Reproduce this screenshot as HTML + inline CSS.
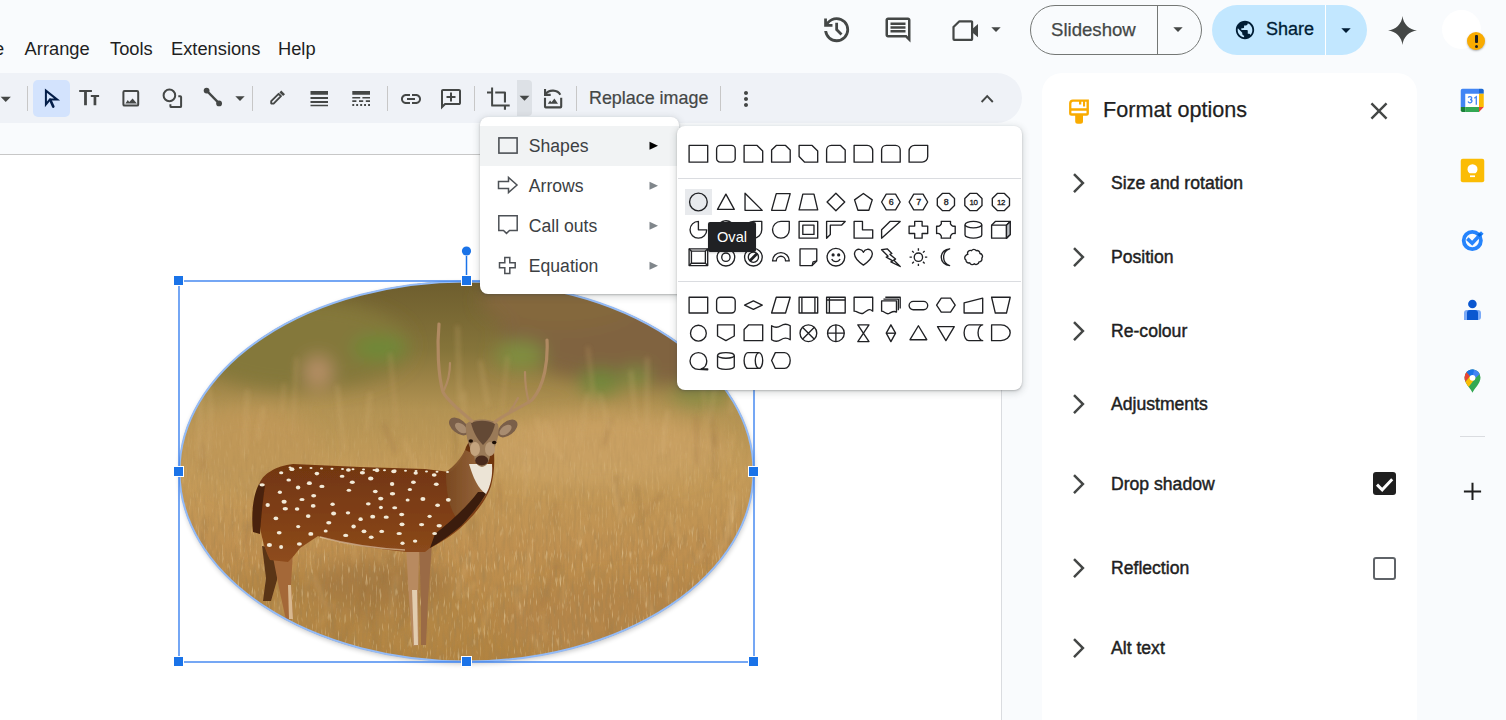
<!DOCTYPE html>
<html><head><meta charset="utf-8">
<style>
*{margin:0;padding:0;box-sizing:border-box}
html,body{width:1506px;height:720px;overflow:hidden;background:#f9fbfd;font-family:"Liberation Sans",sans-serif;color:#1f1f1f}
.a{position:absolute}
svg{display:block;position:absolute;overflow:visible}
.menu{top:39px;font-size:18.3px;line-height:20px;color:#1f1f1f;white-space:nowrap}
#toolbar{left:-30px;top:73px;width:1052px;height:50px;background:#eff2f7;border-radius:25px}
.sep{position:absolute;width:1px;height:25px;top:86px;background:#c7c7c7}
#canvas{left:0;top:155px;width:1001px;height:565px;background:#fff}
#hline{left:0;top:154px;width:1001px;height:1px;background:#c7c7c7}
#vline{left:1001px;top:155px;width:1px;height:565px;background:#dadce0}
#panel{left:1042px;top:73px;width:375px;height:700px;background:#fff;border-radius:20px 20px 0 0}
.prow{position:absolute;left:1111px;font-size:17.6px;line-height:20px;font-weight:normal;-webkit-text-stroke:0.45px #1f1f1f;color:#1f1f1f;white-space:nowrap}
.ic{fill:#444746}
</style></head><body>
<!-- menu -->
<div class="a menu" style="left:-6px">e</div>
<div class="a menu" style="left:24.6px">Arrange</div>
<div class="a menu" style="left:110px">Tools</div>
<div class="a menu" style="left:171px">Extensions</div>
<div class="a menu" style="left:278px">Help</div>

<!-- top right icons -->
<svg style="left:819.8px;top:13px" width="33.3" height="33.3" viewBox="0 -960 960 960"><path class="ic" d="M480-120q-138 0-240.5-91.5T122-440h82q14 104 92.5 172T480-200q117 0 198.5-81.5T760-480q0-117-81.5-198.5T480-760q-69 0-129 32t-101 88h110v80H120v-240h80v94q51-64 124.5-99T480-840q75 0 140.5 28.5t114 77q48.5 48.5 77 114T840-480q0 75-28.5 140.5t-77 114q-48.5 48.5-114 77T480-120Zm112-192L440-464v-216h80v184l128 128-56 56Z"/></svg>
<svg style="left:883px;top:15px" width="30" height="30" viewBox="0 0 24 24"><path class="ic" d="M21.99 4c0-1.1-.89-2-1.99-2H4c-1.1 0-2 .9-2 2v12c0 1.1.9 2 2 2h14l4 4-.01-18zM20 4v13.17L18.83 16H4V4h16zM6 12h12v2H6zm0-3h12v2H6zm0-3h12v2H6z"/></svg>
<svg style="left:948px;top:14px" width="36" height="32" viewBox="0 0 36 32"><path fill="none" stroke="#444746" stroke-width="2.2" stroke-linejoin="round" d="M11.4 7.3H23.3a.8.8 0 0 1 .8.8V25.1a.8.8 0 0 1-.8.8H6.3a.8.8 0 0 1-.8-.8V13z"/><path class="ic" d="M24 15.2L30 10v13.2L24 18.2z"/></svg>
<svg style="left:988px;top:22px" width="16" height="16" viewBox="0 0 24 24"><path class="ic" d="M5 8l7 7 7-7z"/></svg>

<!-- Slideshow button -->
<div class="a" style="left:1030px;top:5px;width:172px;height:50px;border:1.3px solid #747775;border-radius:25px"></div>
<div class="a" style="left:1157px;top:5px;width:1.3px;height:50px;background:#747775"></div>
<div class="a" style="left:1051px;top:19px;font-size:18.6px;line-height:22px;color:#444746;-webkit-text-stroke:0.25px #444746">Slideshow</div>
<svg style="left:1170px;top:22px" width="16" height="16" viewBox="0 0 24 24"><path class="ic" d="M5 8l7 7 7-7z"/></svg>

<!-- Share button -->
<div class="a" style="left:1212px;top:5px;width:155px;height:50px;background:#c2e7ff;border-radius:25px"></div>
<div class="a" style="left:1325px;top:5px;width:1px;height:50px;background:#ffffff"></div>
<svg style="left:1233.9px;top:18.8px" width="22" height="22" viewBox="0 0 24 24"><path fill="#001d35" d="M12 2C6.48 2 2 6.48 2 12s4.48 10 10 10 10-4.48 10-10S17.52 2 12 2zm-1 17.93c-3.95-.49-7-3.85-7-7.93 0-.62.08-1.21.21-1.79L9 15v1c0 1.1.9 2 2 2v1.93zm6.9-2.54c-.26-.81-1-1.39-1.9-1.39h-1v-3c0-.55-.45-1-1-1H8v-2h2c.55 0 1-.45 1-1V7h2c1.1 0 2-.9 2-2v-.41c2.93 1.19 5 4.06 5 7.41 0 2.080-.8 3.97-2.1 5.39z"/></svg>
<div class="a" style="left:1266px;top:18px;font-size:18px;line-height:22px;-webkit-text-stroke:0.3px #001d35;color:#001d35">Share</div>
<svg style="left:1338px;top:23px" width="16" height="16" viewBox="0 0 24 24"><path fill="#001d35" d="M5 8l7 7 7-7z"/></svg>

<!-- Gemini sparkle -->
<svg style="left:1388px;top:16px" width="29" height="29" viewBox="0 0 28 28"><path class="ic" d="M14 0C14.6 7.4 20.6 13.4 28 14 20.6 14.6 14.6 20.6 14 28 13.4 20.6 7.4 14.6 0 14 7.4 13.4 13.4 7.4 14 0z"/></svg>

<!-- avatar -->
<div class="a" style="left:1442px;top:10px;width:39px;height:39px;border-radius:50%;background:#ffffff"></div>
<div class="a" style="left:1467px;top:32px;width:18px;height:18px;border-radius:50%;background:#f9ab00;box-shadow:0 1px 2px rgba(0,0,0,.3)"></div>
<div class="a" style="left:1474.5px;top:35px;width:3px;height:8px;background:#1f1f1f;border-radius:1px"></div>
<div class="a" style="left:1474.5px;top:44.5px;width:3px;height:3px;background:#1f1f1f;border-radius:50%"></div>

<div id="toolbar" class="a"></div>

<!-- toolbar icons -->
<svg style="left:-3.2px;top:90.5px" width="17.5" height="17.5" viewBox="0 0 24 24"><path class="ic" d="M5 8l7 7 7-7z"/></svg>
<div class="sep" style="left:27px"></div>
<div class="a" style="left:33px;top:80px;width:37px;height:37px;background:#d3e3fd;border-radius:5px"></div>
<svg style="left:0;top:0" width="110" height="120" viewBox="0 0 110 120"><path fill="none" stroke="#041e49" stroke-width="2" stroke-linejoin="miter" d="M45.9 90.6V104.4L49.9 99.6H57.2z"/><path stroke="#041e49" stroke-width="2.6" stroke-linecap="round" d="M50.2 99.8L53.3 106.6"/></svg>
<svg style="left:0;top:0" width="110" height="120" viewBox="0 0 110 120"><path class="ic" d="M79.2 89.9H91.9V92H86.9V105.2H84.1V92H79.2zM90.8 95H99.1V97H96.3V105.2H93.6V97H90.8z"/></svg>
<svg style="left:0;top:0" width="200" height="120" viewBox="0 0 200 120"><rect x="123.4" y="91.1" width="14.8" height="14.5" rx="1.2" fill="none" stroke="#444746" stroke-width="2"/><path class="ic" d="M125.4 103.6L127.8 100.1 129.2 101.9 132.6 98.4 136.9 103.6z"/></svg>
<svg style="left:0;top:0" width="200" height="120" viewBox="0 0 200 120"><circle cx="169.4" cy="95.4" r="5.8" fill="none" stroke="#444746" stroke-width="2"/><path fill="none" stroke="#444746" stroke-width="2" d="M178.3 96.2H180.2a.9.9 0 0 1 .9.9V106.2a.9.9 0 0 1-.9.9H171.3a.9.9 0 0 1-.9-.9V104.3"/></svg>
<svg style="left:0;top:0" width="300" height="120" viewBox="0 0 300 120"><path stroke="#444746" stroke-width="2.3" d="M206.6 90.6L219.1 103.4"/><circle cx="206.6" cy="90.6" r="2.9" fill="#444746"/><circle cx="219.1" cy="103.4" r="2.9" fill="#444746"/></svg>
<svg style="left:232px;top:90.5px" width="16" height="16" viewBox="0 0 24 24"><path class="ic" d="M5 8l7 7 7-7z"/></svg>
<div class="sep" style="left:252px"></div>
<svg style="left:0;top:0" width="300" height="120" viewBox="0 0 300 120"><path fill="none" stroke="#444746" stroke-width="1.9" stroke-linejoin="round" d="M271.2 103.3V101.2L278.6 93.8 281 96.2 273.6 103.6H271.5z"/><path class="ic" d="M279.4 92.4L281.3 90.5 285 94.2 283.1 96.1z"/></svg>
<svg style="left:0;top:0" width="400" height="120" viewBox="0 0 400 120"><path class="ic" d="M310.5 91h17.5v3.7h-17.5zM310.5 96.9h17.5V99h-17.5zM310.5 101.1h17.5v1.8h-17.5zM310.5 104.8h17.5v1.4h-17.5z"/></svg>
<svg style="left:0;top:0" width="400" height="120" viewBox="0 0 400 120"><path class="ic" d="M352.3 91H370v3.7H352.3zM352.3 96.9h7.9v1.7h-7.9zM362.4 96.9H370v1.7h-7.6zM352.3 100.3h4.1v1.7h-4.1zM359 100.3h4.2v1.7H359zM365.8 100.3H370v1.7h-4.2zM352.3 104h1.9v2h-1.9zM356.2 104h1.9v2h-1.9zM360.2 104h1.9v2h-1.9zM364.1 104H366v2h-1.9zM368.1 104H370v2h-1.9z"/></svg>
<div class="sep" style="left:387px"></div>
<svg style="left:399px;top:87px" width="24" height="24" viewBox="0 0 24 24"><path class="ic" d="M3.9 12c0-1.71 1.39-3.1 3.1-3.1h4V7H7c-2.76 0-5 2.24-5 5s2.24 5 5 5h4v-1.9H7c-1.71 0-3.1-1.39-3.1-3.1zM8 13h8v-2H8v2zm9-6h-4v1.9h4c1.710 0 3.1 1.39 3.1 3.1s-1.39 3.1-3.1 3.1h-4V17h4c2.76 0 5-2.24 5-5s-2.24-5-5-5z"/></svg>
<svg style="left:438.5px;top:86.5px" width="24" height="24" viewBox="0 0 24 24"><path class="ic" d="M11 14.5h2v-3.5h3.5V9H13V5.5h-2V9H7.5v2H11zM2 22.5V4q0-.825.588-1.413Q3.175 2 4 2h16q.825 0 1.413.587Q22 3.175 22 4v12q0 .825-.587 1.413Q20.825 18 20 18H6.5zM4 17.6L5.7 16H20V4H4z"/></svg>
<div class="sep" style="left:474px"></div>
<svg style="left:0;top:0" width="600" height="120" viewBox="0 0 600 120"><path class="ic" d="M487 91.4H491.1V87.6H493.1V104.5H509.7V106.6H506V109.8H503.9V106.6H492.3a1.2 1.2 0 0 1-1.2-1.2V93.5H487zM495.2 91.4H504.8a1.2 1.2 0 0 1 1.2 1.2V102.5H503.9V93.5H495.2z"/></svg>
<div class="a" style="left:517px;top:80px;width:15px;height:36px;background:#dde1e6;border-radius:0 4px 4px 0"></div>
<svg style="left:516px;top:90px" width="17" height="17" viewBox="0 0 24 24"><path class="ic" d="M5 8l7 7 7-7z"/></svg>
<svg style="left:536px;top:82px" width="34" height="32" viewBox="0 0 34 32"><path fill="none" stroke="#444746" stroke-width="2.1" d="M9 15.8V24.6a.8.8 0 0 0 .8.8h14.6a.8.8 0 0 0 .8-.8V15.8"/><path fill="none" stroke="#444746" stroke-width="2.1" d="M9.6 12A8.2 6.6 0 0 1 24.3 12.7"/><path fill="#444746" d="M8 7.1h2.1v4.7h4.6v2.1H8z"/><path fill="#444746" d="M11.8 21.8l2.3-3.2 1.4 1.7 2.9-3.8 3.6 5.3z"/></svg>
<div class="sep" style="left:576px"></div>
<div class="a" style="left:589px;top:87px;font-size:17.9px;line-height:22px;color:#444746;-webkit-text-stroke:0.2px #444746;white-space:nowrap">Replace image</div>
<div class="sep" style="left:720px"></div>
<svg style="left:734px;top:86.5px" width="24" height="24" viewBox="0 0 24 24"><path class="ic" d="M12 8c1.1 0 2-.9 2-2s-.9-2-2-2-2 .9-2 2 .9 2 2 2zm0 2c-1.1 0-2 .9-2 2s.9 2 2 2 2-.9 2-2-.9-2-2-2zm0 6c-1.1 0-2 .9-2 2s.9 2 2 2 2-.9 2-2-.9-2-2-2z"/></svg>
<svg style="left:0;top:0" width="1010" height="120" viewBox="0 0 1010 120"><path fill="none" stroke="#444746" stroke-width="1.9" d="M981.6 102L987.2 96.1 992.8 102"/></svg>
<div id="hline" class="a"></div>
<div id="canvas" class="a"></div>
<div id="vline" class="a"></div>
<!-- photo -->
<svg style="left:0;top:0" width="1002" height="720" viewBox="0 0 1002 720">
<defs>
<clipPath id="ov"><ellipse cx="466.5" cy="471.5" rx="287.5" ry="190.5"/></clipPath>
<linearGradient id="bg" x1="0" y1="0" x2="0" y2="1">
<stop offset="0" stop-color="#6a5a2c"/>
<stop offset="0.2" stop-color="#85743a"/>
<stop offset="0.35" stop-color="#b39353"/>
<stop offset="0.5" stop-color="#c59c5a"/>
<stop offset="0.7" stop-color="#bf9050"/>
<stop offset="1" stop-color="#b0823f"/>
</linearGradient>
<filter id="b8" x="-50%" y="-50%" width="200%" height="200%"><feGaussianBlur stdDeviation="9"/></filter>
<filter id="b4" x="-50%" y="-50%" width="200%" height="200%"><feGaussianBlur stdDeviation="2.5"/></filter>
<filter id="b1"><feGaussianBlur stdDeviation="0.5"/></filter>
<filter id="grain" x="0" y="0" width="100%" height="100%"><feTurbulence type="fractalNoise" baseFrequency="0.35 0.06" numOctaves="2" seed="4"/><feColorMatrix type="matrix" values="0 0 0 0 0.35  0 0 0 0 0.22  0 0 0 0 0.08  0 0 0 -2.2 1.25"/></filter>
<filter id="grain2" x="0" y="0" width="100%" height="100%"><feTurbulence type="fractalNoise" baseFrequency="0.5 0.08" numOctaves="2" seed="9"/><feColorMatrix type="matrix" values="0 0 0 0 0.92  0 0 0 0 0.78  0 0 0 0 0.5  0 0 0 2.6 -1.55"/></filter>
<linearGradient id="gmask" x1="0" y1="0" x2="0" y2="1"><stop offset="0" stop-color="#fff" stop-opacity="0"/><stop offset="0.32" stop-color="#fff" stop-opacity="0"/><stop offset="0.5" stop-color="#fff" stop-opacity="0.35"/><stop offset="0.75" stop-color="#fff" stop-opacity="1"/><stop offset="1" stop-color="#fff" stop-opacity="1"/></linearGradient>
<mask id="lowmask"><rect x="170" y="270" width="600" height="400" fill="url(#gmask)"/></mask>

</defs>
<ellipse cx="467" cy="473.5" rx="287.5" ry="190.5" fill="#000" opacity=".22" filter="url(#b4)"/>
<g clip-path="url(#ov)">
<rect x="170" y="270" width="600" height="400" fill="url(#bg)"/>
<g filter="url(#b8)">
<ellipse cx="650" cy="330" rx="150" ry="55" fill="#806440"/>
<ellipse cx="560" cy="300" rx="80" ry="30" fill="#84683e"/>
<ellipse cx="300" cy="345" rx="110" ry="45" fill="#84783a"/>
<ellipse cx="380" cy="348" rx="28" ry="12" fill="#6d8a38"/>
<ellipse cx="520" cy="355" rx="25" ry="14" fill="#7f8f40"/>
<ellipse cx="600" cy="382" rx="20" ry="13" fill="#70893a"/>
<ellipse cx="636" cy="376" rx="14" ry="9" fill="#7a9040"/>
<ellipse cx="700" cy="395" rx="30" ry="12" fill="#8a8c45"/>
<ellipse cx="318" cy="372" rx="14" ry="16" fill="#b89068"/>
<ellipse cx="600" cy="450" rx="130" ry="35" fill="#c9a062"/>
<ellipse cx="250" cy="450" rx="70" ry="40" fill="#c09858"/>
<ellipse cx="330" cy="610" rx="140" ry="40" fill="#b38645"/>
<ellipse cx="640" cy="620" rx="140" ry="40" fill="#b5864a"/>
<ellipse cx="380" cy="585" rx="70" ry="25" fill="#a87c42"/>
</g>
<g filter="url(#b4)" stroke-width="1.3" fill="none" opacity=".8">
<path d="M541 607q8.0 -21.4 15.9 -42.8" stroke="#9a7040"/>
<path d="M197 545q2.7 -24.0 5.4 -48.0" stroke="#d6ad6c"/>
<path d="M246 546q0.8 -11.8 1.6 -23.6" stroke="#9a7040"/>
<path d="M325 605q-5.7 -14.6 -11.4 -29.3" stroke="#e2c08a"/>
<path d="M273 619q2.1 -9.9 4.2 -19.9" stroke="#d6ad6c"/>
<path d="M257 659q4.9 -7.6 9.8 -15.2" stroke="#d6ad6c"/>
<path d="M686 505q0.7 -24.3 1.4 -48.7" stroke="#d6ad6c"/>
<path d="M285 658q8.4 -10.9 16.7 -21.9" stroke="#e2c08a"/>
<path d="M353 521q-6.4 -10.4 -12.8 -20.8" stroke="#dcb77c"/>
<path d="M372 624q1.7 -17.8 3.5 -35.5" stroke="#8e6a3a"/>
<path d="M218 520q3.5 -12.9 7.1 -25.7" stroke="#d6ad6c"/>
<path d="M459 599q8.6 -8.5 17.1 -17.0" stroke="#dcb77c"/>
<path d="M731 520q0.9 -14.6 1.8 -29.2" stroke="#e2c08a"/>
<path d="M392 570q-8.2 -7.7 -16.3 -15.3" stroke="#d6ad6c"/>
<path d="M542 655q-4.6 -9.6 -9.1 -19.2" stroke="#e2c08a"/>
<path d="M380 520q5.0 -16.7 9.9 -33.4" stroke="#dcb77c"/>
<path d="M522 616q-3.7 -13.9 -7.3 -27.9" stroke="#e2c08a"/>
<path d="M729 461q2.0 -13.5 4.0 -26.9" stroke="#d6ad6c"/>
<path d="M377 648q-3.4 -17.0 -6.8 -34.1" stroke="#8e6a3a"/>
<path d="M358 620q4.0 -18.5 8.0 -36.9" stroke="#8e6a3a"/>
<path d="M758 476q8.8 -8.3 17.5 -16.7" stroke="#9a7040"/>
<path d="M716 447q-2.8 -20.5 -5.6 -40.9" stroke="#8e6a3a"/>
<path d="M444 535q7.5 -8.5 15.0 -16.9" stroke="#dcb77c"/>
<path d="M645 515q8.7 -11.1 17.3 -22.2" stroke="#9a7040"/>
<path d="M731 582q-7.1 -21.3 -14.2 -42.6" stroke="#e2c08a"/>
<path d="M396 453q-6.5 -14.9 -12.9 -29.7" stroke="#9a7040"/>
<path d="M674 660q-0.2 -15.4 -0.4 -30.9" stroke="#8e6a3a"/>
<path d="M458 505q-6.4 -14.6 -12.7 -29.1" stroke="#e2c08a"/>
<path d="M657 560q7.9 -10.6 15.7 -21.3" stroke="#8e6a3a"/>
<path d="M284 551q0.9 -16.5 1.7 -33.0" stroke="#9a7040"/>
<path d="M390 617q3.5 -21.1 7.0 -42.1" stroke="#dcb77c"/>
<path d="M621 522q-3.9 -19.8 -7.9 -39.7" stroke="#e2c08a"/>
<path d="M334 661q8.2 -20.0 16.4 -40.1" stroke="#8e6a3a"/>
<path d="M557 571q0.8 -7.7 1.7 -15.4" stroke="#8e6a3a"/>
<path d="M369 502q0.0 -12.6 0.0 -25.1" stroke="#8e6a3a"/>
<path d="M382 585q5.9 -20.4 11.8 -40.8" stroke="#8e6a3a"/>
<path d="M715 479q-0.9 -22.7 -1.8 -45.3" stroke="#8e6a3a"/>
<path d="M735 557q-6.0 -16.8 -12.0 -33.5" stroke="#8e6a3a"/>
<path d="M724 547q4.0 -19.6 7.9 -39.2" stroke="#e2c08a"/>
<path d="M280 616q3.0 -17.7 6.0 -35.3" stroke="#e2c08a"/>
<path d="M356 564q-4.1 -22.7 -8.3 -45.3" stroke="#dcb77c"/>
<path d="M293 572q-5.7 -18.4 -11.5 -36.8" stroke="#d6ad6c"/>
<path d="M546 449q-4.9 -15.8 -9.9 -31.5" stroke="#dcb77c"/>
<path d="M697 465q-0.3 -24.4 -0.6 -48.9" stroke="#9a7040"/>
<path d="M201 545q2.0 -14.2 4.0 -28.3" stroke="#9a7040"/>
<path d="M299 602q-2.7 -14.0 -5.4 -28.1" stroke="#8e6a3a"/>
<path d="M676 635q0.9 -19.6 1.7 -39.1" stroke="#dcb77c"/>
<path d="M499 508q0.2 -12.7 0.5 -25.3" stroke="#9a7040"/>
<path d="M350 519q-1.6 -9.8 -3.3 -19.5" stroke="#9a7040"/>
<path d="M553 523q1.7 -10.0 3.5 -20.0" stroke="#9a7040"/>
<path d="M457 485q-7.4 -9.8 -14.7 -19.7" stroke="#dcb77c"/>
<path d="M401 513q0.7 -23.5 1.4 -47.1" stroke="#8e6a3a"/>
<path d="M545 641q-1.2 -14.1 -2.5 -28.2" stroke="#d6ad6c"/>
<path d="M466 548q-2.1 -19.9 -4.2 -39.8" stroke="#d6ad6c"/>
<path d="M526 498q-0.1 -24.7 -0.1 -49.3" stroke="#e2c08a"/>
<path d="M191 653q7.7 -12.9 15.5 -25.8" stroke="#d6ad6c"/>
<path d="M457 467q-1.0 -18.4 -2.0 -36.8" stroke="#8e6a3a"/>
<path d="M203 471q-0.4 -14.4 -0.7 -28.7" stroke="#9a7040"/>
<path d="M339 650q-4.6 -21.2 -9.2 -42.4" stroke="#8e6a3a"/>
<path d="M669 602q-0.1 -12.5 -0.3 -25.0" stroke="#e2c08a"/>
<path d="M481 634q7.1 -22.9 14.2 -45.8" stroke="#dcb77c"/>
<path d="M621 508q-2.9 -16.8 -5.9 -33.7" stroke="#8e6a3a"/>
<path d="M604 446q3.3 -13.6 6.5 -27.2" stroke="#9a7040"/>
<path d="M257 441q3.3 -17.2 6.7 -34.4" stroke="#dcb77c"/>
<path d="M695 563q5.0 -7.8 10.0 -15.5" stroke="#e2c08a"/>
<path d="M525 595q2.7 -24.2 5.4 -48.4" stroke="#e2c08a"/>
<path d="M456 594q7.2 -20.1 14.4 -40.2" stroke="#e2c08a"/>
<path d="M661 455q3.5 -22.1 7.0 -44.3" stroke="#e2c08a"/>
<path d="M518 586q-3.4 -15.8 -6.8 -31.5" stroke="#d6ad6c"/>
<path d="M457 564q-3.0 -16.2 -6.1 -32.4" stroke="#d6ad6c"/>
<path d="M427 562q4.2 -8.3 8.4 -16.7" stroke="#8e6a3a"/>
<path d="M655 618q-8.5 -19.1 -17.1 -38.2" stroke="#e2c08a"/>
<path d="M748 665q-8.1 -19.8 -16.2 -39.5" stroke="#dcb77c"/>
<path d="M307 585q3.8 -24.2 7.6 -48.3" stroke="#d6ad6c"/>
<path d="M757 599q-5.7 -15.2 -11.4 -30.3" stroke="#d6ad6c"/>
<path d="M420 476q-8.2 -18.4 -16.4 -36.8" stroke="#dcb77c"/>
<path d="M563 608q1.3 -12.4 2.6 -24.8" stroke="#dcb77c"/>
<path d="M611 638q-1.2 -9.9 -2.5 -19.7" stroke="#8e6a3a"/>
<path d="M578 550q2.8 -13.7 5.6 -27.4" stroke="#dcb77c"/>
<path d="M260 506q3.2 -17.5 6.4 -34.9" stroke="#8e6a3a"/>
<path d="M708 565q-4.3 -18.4 -8.5 -36.7" stroke="#9a7040"/>
<path d="M317 627q8.6 -12.5 17.1 -24.9" stroke="#d6ad6c"/>
<path d="M681 542q-6.6 -14.3 -13.3 -28.6" stroke="#dcb77c"/>
<path d="M560 459q-7.4 -19.2 -14.7 -38.4" stroke="#dcb77c"/>
<path d="M474 542q-0.7 -14.3 -1.3 -28.6" stroke="#8e6a3a"/>
<path d="M242 559q-2.1 -17.0 -4.2 -34.0" stroke="#d6ad6c"/>
<path d="M728 537q4.5 -21.4 9.0 -42.8" stroke="#dcb77c"/>
<path d="M744 590q-6.5 -21.9 -13.0 -43.7" stroke="#9a7040"/>
<path d="M398 628q7.7 -12.6 15.5 -25.1" stroke="#8e6a3a"/>
<path d="M642 525q-2.6 -20.1 -5.1 -40.3" stroke="#8e6a3a"/>
<path d="M647 430q0.2 -36.3 0.3 -72.6" stroke="#d6b47a"/>
<path d="M609 428q-4.7 -17.4 -9.3 -34.8" stroke="#d6b47a"/>
<path d="M293 434q1.6 -38.4 3.2 -76.9" stroke="#caa56a"/>
<path d="M180 433q1.2 -37.2 2.4 -74.5" stroke="#caa56a"/>
<path d="M367 432q1.5 -19.8 3.1 -39.6" stroke="#d6b47a"/>
<path d="M397 427q-3.5 -37.0 -7.0 -74.0" stroke="#caa56a"/>
<path d="M244 457q1.7 -33.8 3.4 -67.5" stroke="#d6b47a"/>
<path d="M460 402q-1.3 -38.1 -2.6 -76.2" stroke="#d6b47a"/>
<path d="M579 447q4.5 -26.8 8.9 -53.6" stroke="#d6b47a"/>
<path d="M636 423q-2.6 -26.3 -5.2 -52.7" stroke="#d6b47a"/>
<path d="M199 450q1.6 -29.4 3.1 -58.7" stroke="#caa56a"/>
<path d="M709 449q-3.2 -32.0 -6.3 -64.0" stroke="#caa56a"/>
<path d="M344 451q-3.4 -32.9 -6.7 -65.9" stroke="#d6b47a"/>
<path d="M282 415q1.1 -16.1 2.2 -32.2" stroke="#caa56a"/>
<path d="M184 404q-0.9 -34.5 -1.8 -69.0" stroke="#d6b47a"/>
<path d="M199 458q0.7 -35.9 1.3 -71.9" stroke="#d6b47a"/>
<path d="M596 417q-4.1 -35.1 -8.2 -70.2" stroke="#caa56a"/>
<path d="M211 417q-1.0 -16.3 -2.1 -32.5" stroke="#d6b47a"/>
<path d="M208 458q1.4 -26.1 2.8 -52.3" stroke="#d6b47a"/>
<path d="M731 414q1.4 -32.4 2.8 -64.8" stroke="#d6b47a"/>
<path d="M488 406q-3.9 -22.8 -7.8 -45.7" stroke="#d6b47a"/>
<path d="M527 460q-4.8 -20.4 -9.7 -40.7" stroke="#caa56a"/>
<path d="M462 440q1.3 -24.4 2.5 -48.8" stroke="#d6b47a"/>
<path d="M710 422q3.3 -26.2 6.5 -52.5" stroke="#d6b47a"/>
<path d="M502 410q2.8 -27.1 5.6 -54.2" stroke="#caa56a"/>
</g>
<g mask="url(#lowmask)"><rect x="170" y="270" width="600" height="400" filter="url(#grain)" opacity=".55"/><rect x="170" y="270" width="600" height="400" filter="url(#grain2)" opacity=".6"/></g>
<!-- deer -->
<defs>
<linearGradient id="dbody" x1="0" y1="0" x2="0" y2="1">
<stop offset="0" stop-color="#4e2408"/><stop offset="0.12" stop-color="#6e3410"/><stop offset="0.6" stop-color="#7e3e14"/><stop offset="1" stop-color="#8e4c1c"/>
</linearGradient>
<linearGradient id="dneck" x1="0" y1="0" x2="1" y2="0">
<stop offset="0" stop-color="#7a4a22"/><stop offset="1" stop-color="#9a6a40"/>
</linearGradient>
</defs>
<g filter="url(#b1)">
<path fill="#5a3418" d="M262 546L279 549 277 580 271 601 263 601 266 578z"/>
<path fill="#a46838" d="M272 552L293 552 291 585 293 619 286 620 279 588z"/>
<path fill="#d8b890" d="M288 585L291 585 293 619 289 619z"/>
<path fill="#b88a60" d="M406 546L419 546 418 600 419 645 413 646 409 600z"/>
<path fill="#e2cdb0" d="M412 590L417 590 418 645 414 645z"/>
<path fill="#9a6a44" d="M419 546L432 544 428 600 426 645 421 645 421 600z"/>
<path fill="url(#dbody)" d="M259 485C262 474 276 466 293 464L360 467 425 469 450 472C458 466 463 458 466 447L472 436 494 452C495 468 493 478 491 486 486 502 470 520 458 530 448 538 438 544 430 548L425 552 406 552C380 549 345 545 318 536L300 548C295 555 290 560 288 562L270 560C264 548 261 535 259 520z"/>
<path fill="url(#dneck)" d="M446 472C454 466 460 460 465 450L474 454C477 470 481 484 487 493 480 505 470 516 462 525 452 515 446 500 446 472z" opacity=".95"/>
<path fill="#3a1e0c" d="M487 492C480 505 470 516 462 525 452 534 440 542 430 548L435 534C450 522 466 508 478 492z"/>
<path fill="#4a220a" d="M259 484C253 495 251 515 253 532L260 534C261 518 263 498 265 486z"/>
<path fill="#ece4d6" d="M469 464C473 477 478 489 486 494 490 487 493 477 492 464z"/>
<path fill="none" stroke="#e8d4b8" stroke-width="1.4" opacity=".6" d="M320 537C350 545 385 549 405 550"/>
<ellipse cx="459" cy="426.5" rx="11.5" ry="6.8" fill="#7a5e48" transform="rotate(38 459 426.5)"/>
<ellipse cx="461" cy="428" rx="7" ry="4" fill="#a88c70" transform="rotate(38 461 428)"/>
<ellipse cx="507.5" cy="428.5" rx="11.5" ry="6.8" fill="#7a5e48" transform="rotate(-38 507.5 428.5)"/>
<ellipse cx="505.5" cy="430" rx="7" ry="4" fill="#a88c70" transform="rotate(-38 505.5 430)"/>
<path fill="#9a7a58" d="M466 424C472 418 492 418 498 424 500 432 497 446 490 456 489 462 487 466 482 467 477 466 475 462 474 456 468 446 465 432 466 424z"/>
<path fill="#5a4030" opacity=".85" d="M471 423C478 420 488 420 495 424 493 434 488 440 483 445 478 440 474 434 471 423z"/>
<ellipse cx="475" cy="449" rx="5" ry="7" fill="#c4a47e"/>
<ellipse cx="490" cy="449" rx="5" ry="7" fill="#b89a78"/>
<ellipse cx="470.8" cy="441" rx="2.2" ry="1.8" fill="#1a0e06"/><ellipse cx="494.2" cy="442.5" rx="2.2" ry="1.8" fill="#1a0e06"/>
<ellipse cx="481.7" cy="460.5" rx="6.5" ry="5" fill="#4a2c1c"/>
</g>
<g stroke="#b08a62" fill="none" stroke-linecap="round" stroke-linejoin="round">
<path stroke-width="3.2" d="M472 421C462 412 448 402 443 392 438 375 437 345 439 324"/>
<path stroke-width="2.2" d="M444 390C448 382 450 372 450 363"/>
<path stroke-width="3.2" d="M495 422C505 414 520 408 532 400 545 385 548 360 547 340"/>
<path stroke-width="2.2" d="M529 403C526 392 525 382 525 372M510 411C514 406 516 402 518 398"/>
</g>
<g fill="#f2ead8" filter="url(#b1)">
<ellipse cx="348.0" cy="512.8" rx="2.2" ry="1.6"/>
<ellipse cx="437.6" cy="505.3" rx="2.4" ry="1.7"/>
<ellipse cx="297.1" cy="509.0" rx="2.3" ry="1.7"/>
<ellipse cx="381.7" cy="531.4" rx="2.4" ry="1.6"/>
<ellipse cx="279.9" cy="492.3" rx="2.1" ry="1.8"/>
<ellipse cx="279.2" cy="532.8" rx="2.4" ry="1.8"/>
<ellipse cx="393.8" cy="471.4" rx="2.6" ry="1.8"/>
<ellipse cx="386.2" cy="517.2" rx="2.6" ry="1.6"/>
<ellipse cx="291.9" cy="469.2" rx="2.5" ry="1.9"/>
<ellipse cx="362.4" cy="472.8" rx="2.6" ry="1.7"/>
<ellipse cx="298.1" cy="487.4" rx="2.2" ry="2.0"/>
<ellipse cx="267.7" cy="505.1" rx="2.2" ry="2.0"/>
<ellipse cx="345.7" cy="535.4" rx="2.6" ry="1.6"/>
<ellipse cx="360.6" cy="519.2" rx="2.2" ry="1.9"/>
<ellipse cx="348.9" cy="490.3" rx="2.2" ry="1.5"/>
<ellipse cx="421.6" cy="524.6" rx="2.6" ry="1.7"/>
<ellipse cx="321.9" cy="486.4" rx="2.6" ry="1.6"/>
<ellipse cx="316.9" cy="473.6" rx="2.3" ry="1.8"/>
<ellipse cx="407.6" cy="500.0" rx="2.0" ry="1.6"/>
<ellipse cx="422.9" cy="498.9" rx="2.5" ry="2.0"/>
<ellipse cx="262.1" cy="484.8" rx="2.7" ry="1.6"/>
<ellipse cx="448.3" cy="499.8" rx="2.4" ry="1.9"/>
<ellipse cx="275.9" cy="518.4" rx="2.4" ry="1.8"/>
<ellipse cx="409.9" cy="489.6" rx="2.1" ry="1.5"/>
<ellipse cx="281.2" cy="472.8" rx="2.1" ry="1.5"/>
<ellipse cx="413.4" cy="482.2" rx="2.4" ry="1.8"/>
<ellipse cx="368.3" cy="503.8" rx="2.4" ry="1.6"/>
<ellipse cx="298.2" cy="526.6" rx="2.1" ry="1.6"/>
<ellipse cx="284.1" cy="501.7" rx="2.6" ry="2.0"/>
<ellipse cx="302.0" cy="499.5" rx="2.6" ry="1.5"/>
<ellipse cx="281.1" cy="547.1" rx="2.0" ry="2.0"/>
<ellipse cx="308.2" cy="516.1" rx="2.3" ry="1.9"/>
<ellipse cx="332.6" cy="504.3" rx="2.2" ry="1.7"/>
<ellipse cx="371.2" cy="537.3" rx="2.4" ry="1.7"/>
<ellipse cx="434.6" cy="533.4" rx="2.4" ry="1.5"/>
<ellipse cx="309.4" cy="483.2" rx="2.5" ry="1.9"/>
<ellipse cx="402.5" cy="543.2" rx="2.1" ry="1.7"/>
<ellipse cx="299.4" cy="544.0" rx="2.5" ry="1.7"/>
<ellipse cx="429.6" cy="516.3" rx="2.1" ry="1.6"/>
<ellipse cx="342.1" cy="476.3" rx="2.4" ry="1.5"/>
<ellipse cx="269.4" cy="545.0" rx="2.6" ry="1.9"/>
<ellipse cx="310.8" cy="533.9" rx="2.5" ry="1.9"/>
<ellipse cx="375.3" cy="491.5" rx="2.4" ry="1.7"/>
<ellipse cx="436.3" cy="484.3" rx="2.4" ry="1.8"/>
<ellipse cx="370.7" cy="478.5" rx="2.7" ry="1.9"/>
<ellipse cx="353.6" cy="526.4" rx="2.2" ry="2.0"/>
<ellipse cx="402.0" cy="524.3" rx="2.5" ry="1.9"/>
<ellipse cx="328.8" cy="522.8" rx="2.6" ry="1.7"/>
<ellipse cx="380.7" cy="498.6" rx="2.6" ry="1.9"/>
<ellipse cx="372.7" cy="516.7" rx="2.5" ry="1.9"/>
<ellipse cx="401.7" cy="514.5" rx="2.5" ry="1.7"/>
<ellipse cx="394.7" cy="507.8" rx="2.5" ry="1.5"/>
<ellipse cx="415.1" cy="541.1" rx="2.2" ry="1.7"/>
<ellipse cx="380.9" cy="507.5" rx="2.0" ry="1.7"/>
<ellipse cx="348.4" cy="470.0" rx="2.4" ry="1.8"/>
<ellipse cx="392.1" cy="483.9" rx="2.2" ry="2.0"/>
<ellipse cx="352.3" cy="482.3" rx="2.5" ry="1.7"/>
<ellipse cx="313.7" cy="495.7" rx="2.5" ry="1.8"/>
<ellipse cx="434.2" cy="475.0" rx="2.4" ry="1.7"/>
<ellipse cx="439.2" cy="525.8" rx="2.7" ry="1.8"/>
<ellipse cx="333.6" cy="513.5" rx="2.5" ry="1.9"/>
<ellipse cx="399.2" cy="533.5" rx="2.7" ry="1.5"/>
<ellipse cx="364.0" cy="531.3" rx="2.4" ry="1.9"/>
<ellipse cx="415.7" cy="473.1" rx="2.2" ry="1.7"/>
<ellipse cx="325.7" cy="531.0" rx="2.0" ry="1.6"/>
<ellipse cx="288.7" cy="479.9" rx="2.3" ry="1.5"/>
<ellipse cx="377.0" cy="470.2" rx="2.2" ry="2.0"/>
<ellipse cx="313.2" cy="505.9" rx="2.4" ry="1.8"/>
<ellipse cx="392.5" cy="493.8" rx="2.7" ry="1.8"/>
<ellipse cx="285.3" cy="508.8" rx="2.7" ry="1.8"/>
<ellipse cx="290.0" cy="467.5" rx="1.5" ry="1"/>
<ellipse cx="300.5" cy="467.8" rx="1.5" ry="1"/>
<ellipse cx="311.0" cy="468.1" rx="1.5" ry="1"/>
<ellipse cx="321.5" cy="468.4" rx="1.5" ry="1"/>
<ellipse cx="332.0" cy="468.7" rx="1.5" ry="1"/>
<ellipse cx="342.5" cy="469.0" rx="1.5" ry="1"/>
<ellipse cx="353.0" cy="469.3" rx="1.5" ry="1"/>
<ellipse cx="363.5" cy="469.6" rx="1.5" ry="1"/>
<ellipse cx="374.0" cy="469.9" rx="1.5" ry="1"/>
<ellipse cx="384.5" cy="470.2" rx="1.5" ry="1"/>
<ellipse cx="395.0" cy="470.5" rx="1.5" ry="1"/>
<ellipse cx="405.5" cy="470.8" rx="1.5" ry="1"/>
<ellipse cx="416.0" cy="471.1" rx="1.5" ry="1"/>
<ellipse cx="426.5" cy="471.4" rx="1.5" ry="1"/>
<ellipse cx="437.0" cy="471.7" rx="1.5" ry="1"/>
<ellipse cx="447.5" cy="472.0" rx="1.5" ry="1"/>
</g>
</g>
<ellipse cx="466.5" cy="471.5" rx="287" ry="190" fill="none" stroke="#94bbf7" stroke-width="2"/>
<!-- selection -->
<rect x="179" y="281" width="575" height="381" fill="none" stroke="#3b82f0" stroke-width="1.4"/>
<line x1="466.5" y1="256" x2="466.5" y2="281" stroke="#1a73e8" stroke-width="1.5"/>
<circle cx="466.5" cy="251" r="4.6" fill="#1a73e8"/>
</svg>
<div class="a" style="left:173.0px;top:275.1px;width:11px;height:11px;background:#1a73e8;border:1px solid #fff"></div>
<div class="a" style="left:173.0px;top:466.1px;width:11px;height:11px;background:#1a73e8;border:1px solid #fff"></div>
<div class="a" style="left:173.0px;top:656.1px;width:11px;height:11px;background:#1a73e8;border:1px solid #fff"></div>
<div class="a" style="left:460.5px;top:275.1px;width:11px;height:11px;background:#1a73e8;border:1px solid #fff"></div>
<div class="a" style="left:460.5px;top:656.1px;width:11px;height:11px;background:#1a73e8;border:1px solid #fff"></div>
<div class="a" style="left:748.0px;top:275.1px;width:11px;height:11px;background:#1a73e8;border:1px solid #fff"></div>
<div class="a" style="left:748.0px;top:466.1px;width:11px;height:11px;background:#1a73e8;border:1px solid #fff"></div>
<div class="a" style="left:748.0px;top:656.1px;width:11px;height:11px;background:#1a73e8;border:1px solid #fff"></div>

<div id="panel" class="a"></div>


<!-- format panel content -->
<svg style="left:1062px;top:94px" width="34" height="34" viewBox="0 0 34 34"><path fill="#f9ab00" fill-rule="evenodd" d="M10.9 5.4H26.9V19.2a2.5 2.5 0 0 1-2.5 2.5H9.6a2.5 2.5 0 0 1-2.5-2.5V9.2a3.8 3.8 0 0 1 3.8-3.8zM11 7.8a1.6 1.6 0 0 0-1.6 1.6V14.2H24.5V7.8H23.1V12.5H21V7.8H19.3V10.4H17V7.8zM9.4 16.7V19.3H24.5V16.7z"/><path fill="#f9ab00" d="M13.2 21H21V27.2a2.5 2.5 0 0 1-2.5 2.5H15.7a2.5 2.5 0 0 1-2.5-2.5z"/></svg>
<div class="a" style="left:1103px;top:98px;font-size:21.6px;line-height:24px;color:#1f1f1f;-webkit-text-stroke:0.25px #1f1f1f;white-space:nowrap">Format options</div>
<svg style="left:1367px;top:99px" width="24" height="24" viewBox="0 0 24 24"><path class="ic" d="M19 6.41L17.59 5 12 10.590 6.41 5 5 6.41 10.59 12 5 17.59 6.41 19 12 13.41 17.59 19 19 17.59 13.41 12z" transform="translate(12 12) scale(1.2) translate(-12 -12)"/></svg>
<svg style="left:1072px;top:172px" width="14" height="21" viewBox="0 0 14 21"><path fill="none" stroke="#444746" stroke-width="2.5" d="M2 2.1L10.9 11.1 2 20.1"/></svg>
<div class="prow" style="top:173px">Size and rotation</div>
<svg style="left:1072px;top:246px" width="14" height="21" viewBox="0 0 14 21"><path fill="none" stroke="#444746" stroke-width="2.5" d="M2 2.1L10.9 11.1 2 20.1"/></svg>
<div class="prow" style="top:247px">Position</div>
<svg style="left:1072px;top:320px" width="14" height="21" viewBox="0 0 14 21"><path fill="none" stroke="#444746" stroke-width="2.5" d="M2 2.1L10.9 11.1 2 20.1"/></svg>
<div class="prow" style="top:321px">Re-colour</div>
<svg style="left:1072px;top:393px" width="14" height="21" viewBox="0 0 14 21"><path fill="none" stroke="#444746" stroke-width="2.5" d="M2 2.1L10.9 11.1 2 20.1"/></svg>
<div class="prow" style="top:394px">Adjustments</div>
<svg style="left:1072px;top:473px" width="14" height="21" viewBox="0 0 14 21"><path fill="none" stroke="#444746" stroke-width="2.5" d="M2 2.1L10.9 11.1 2 20.1"/></svg>
<div class="prow" style="top:474px">Drop shadow</div>
<svg style="left:1072px;top:557px" width="14" height="21" viewBox="0 0 14 21"><path fill="none" stroke="#444746" stroke-width="2.5" d="M2 2.1L10.9 11.1 2 20.1"/></svg>
<div class="prow" style="top:558px">Reflection</div>
<svg style="left:1072px;top:637px" width="14" height="21" viewBox="0 0 14 21"><path fill="none" stroke="#444746" stroke-width="2.5" d="M2 2.1L10.9 11.1 2 20.1"/></svg>
<div class="prow" style="top:638px">Alt text</div>
<div class="a" style="left:1373px;top:472px;width:23px;height:23px;background:#1f1f1f;border-radius:3px"></div>
<svg style="left:1373px;top:472px" width="23" height="23" viewBox="0 0 23 23"><path fill="none" stroke="#fff" stroke-width="2.9" d="M4 12.6l5.2 5.2 10-10.6"/></svg>
<div class="a" style="left:1373px;top:557px;width:23px;height:23px;border:2px solid #5f6368;border-radius:3px"></div>

<!-- dropdown menu -->
<div class="a" style="left:480px;top:117px;width:199px;height:177px;background:#fff;border-radius:8px 8px 0 8px;box-shadow:0 2px 6px 2px rgba(60,64,67,.15),0 1px 2px rgba(60,64,67,.3)"></div>
<div class="a" style="left:480px;top:126px;width:199px;height:40px;background:#f1f3f4"></div>
<svg style="left:498px;top:137px" width="20" height="17" viewBox="0 0 20 17"><rect x="0.9" y="0.9" width="18.2" height="15.2" fill="none" stroke="#4d5156" stroke-width="1.6"/></svg>
<svg style="left:497px;top:176px" width="22" height="18" viewBox="0 0 22 18"><path fill="none" stroke="#4d5156" stroke-width="1.5" stroke-linejoin="miter" d="M1.5 5.5h10V1.5l8.5 7.5-8.5 7.5v-4h-10z"/></svg>
<svg style="left:497px;top:214px" width="22" height="22" viewBox="0 0 22 22"><path fill="none" stroke="#4d5156" stroke-width="1.5" d="M1.8 1.8h18.4v14.6H12.5l-3 3-3-3H1.8z"/></svg>
<svg style="left:498px;top:256px" width="19" height="19" viewBox="0 0 19 19"><path fill="none" stroke="#4d5156" stroke-width="1.5" d="M6.8 1.5h5v5.3h5.4v5h-5.4v5.7h-5v-5.7H1.5v-5h5.3z"/></svg>
<div class="a" style="left:528.8px;top:136px;font-size:17.6px;line-height:20px;color:#3c4043">Shapes</div>
<div class="a" style="left:528.8px;top:176px;font-size:17.6px;line-height:20px;color:#3c4043">Arrows</div>
<div class="a" style="left:528.8px;top:216px;font-size:17.6px;line-height:20px;color:#3c4043">Call outs</div>
<div class="a" style="left:528.8px;top:256px;font-size:17.6px;line-height:20px;color:#3c4043">Equation</div>
<svg style="left:649px;top:141px" width="10" height="10" viewBox="0 0 10 10"><path fill="#000" d="M0.5 0.8L9 4.8 .5 8.8z"/></svg>
<svg style="left:649px;top:181px" width="10" height="10" viewBox="0 0 10 10"><path fill="#80868b" d="M0.5 0.8L9 4.8 .5 8.8z"/></svg>
<svg style="left:649px;top:221px" width="10" height="10" viewBox="0 0 10 10"><path fill="#80868b" d="M0.5 0.8L9 4.8 .5 8.8z"/></svg>
<svg style="left:649px;top:261px" width="10" height="10" viewBox="0 0 10 10"><path fill="#80868b" d="M0.5 0.8L9 4.8 .5 8.8z"/></svg>

<!-- shapes submenu -->
<div class="a" style="left:677px;top:126px;width:345px;height:264px;background:#fff;border-radius:8px;box-shadow:0 2px 6px 2px rgba(60,64,67,.15),0 1px 2px rgba(60,64,67,.3)"></div>
<div class="a" style="left:678px;top:178px;width:343px;height:1px;background:#dadce0"></div>
<div class="a" style="left:678px;top:281px;width:343px;height:1px;background:#dadce0"></div>
<div class="a" style="left:685px;top:189px;width:27px;height:26px;background:#e8eaed"></div>

<!-- right sidebar -->
<svg style="left:1450px;top:80px" width="40" height="40" viewBox="1450 80 40 40">
<rect x="1465" y="93.5" width="14.2" height="13.7" fill="#fff"/>
<path fill="#4285f4" d="M1462.5 88.75H1479V93.75H1465.25V107H1460.75V90.5a1.75 1.75 0 0 1 1.75-1.75z"/>
<path fill="#1967d2" d="M1479 88.75H1482a1.75 1.75 0 0 1 1.75 1.75V93.75H1479z"/>
<path fill="#fbbc04" d="M1479 93.75H1483.75V107H1479z"/>
<path fill="#34a853" d="M1465.25 107H1479V112H1465.25z"/>
<path fill="#188038" d="M1460.75 107H1465.25V112H1462.5a1.75 1.75 0 0 1-1.75-1.75z"/>
<path fill="#ea4335" d="M1479 107H1483.75L1479 112z"/>
<path fill="none" stroke="#4285f4" stroke-width="1.3" d="M1468.2 97.6a1.9 1.7 0 0 1 3.6.4c0 1-.8 1.5-1.8 1.5 1.1 0 2 .6 2 1.7a2 1.8 0 0 1-3.9.3M1474.3 98.2l2-1.5V104.8"/>
</svg>
<svg style="left:1450px;top:150px" width="40" height="40" viewBox="1450 150 40 40">
<rect x="1460.75" y="158.75" width="23.5" height="23.5" rx="2" fill="#fbbc04"/>
<path fill="#fff" d="M1469.5 173.2A5 5 0 1 1 1475.5 173.2z"/>
<rect x="1470" y="175.4" width="5" height="1.7" fill="#fff"/>
</svg>
<svg style="left:1450px;top:220px" width="40" height="40" viewBox="1450 220 40 40">
<circle cx="1472.3" cy="240.5" r="8.6" fill="none" stroke="#2684fc" stroke-width="3.8"/>
<path fill="none" stroke="#2684fc" stroke-width="3.6" stroke-linejoin="miter" d="M1467.3 238.6L1472.2 243.2 1482.3 232.6"/>
<path fill="#0066da" d="M1477.2 234.8L1479.5 232.5 1481.8 234.8 1479.5 237.1z"/>
</svg>
<svg style="left:1450px;top:290px" width="40" height="40" viewBox="1450 290 40 40">
<circle cx="1472.4" cy="304" r="4.3" fill="#0b57d0"/>
<path fill="#7baaf7" d="M1467 310H1478a3 3 0 0 1 3 3V317a3 3 0 0 1-3 3H1464V313a3 3 0 0 1 3-3z"/>
<path fill="#0b57d0" d="M1470 310H1475a3 3 0 0 1 3 3V320H1467V313a3 3 0 0 1 3-3z"/>
</svg>
<svg style="left:1450px;top:360.7px" width="40" height="40" viewBox="1450 360 40 40">
<defs><clipPath id="pin"><path d="M1472.5 391.8C1471 387.5 1464.5 383 1464.5 376.5A8 8 0 0 1 1480.5 376.5C1480.5 383 1474 387.5 1472.5 391.8Z"/></clipPath></defs>
<g clip-path="url(#pin)">
<rect x="1450" y="360" width="40" height="40" fill="#34a853"/>
<path fill="#4285f4" d="M1455 355H1500L1475.5 377 1470 375.25 1455 357.9z"/>
<path fill="#1a73e8" d="M1455 355H1477L1472.5 376 1470 375.25 1455 357.9z"/>
<path fill="#ea4335" d="M1455 357.9L1470 375.25 1455 393.6z"/>
<path fill="#fbbc04" d="M1455 393.6L1470 375.25 1475.5 377 1459.4 398H1455z"/>
</g>
<circle cx="1472.5" cy="376.8" r="2.9" fill="#fff"/>
</svg>
<div class="a" style="left:1460px;top:436px;width:25px;height:1px;background:#dadce0"></div>
<svg style="left:1450px;top:470px" width="40" height="40" viewBox="1450 470 40 40"><path fill="#1f1f1f" d="M1471.5 482.8H1473.5V490.4H1481.1V492.4H1473.5V500H1471.5V492.4H1463.9V490.4H1471.5z"/></svg>
<!-- SHAPES --><svg style="left:0;top:0" width="1506" height="720" viewBox="0 0 1506 720"><g fill="none" stroke="#202124" stroke-width="1.45" stroke-linejoin="round"><g transform="translate(698.40 153.80) scale(0.93) translate(-11 -11)"><rect x="1" y="2" width="20" height="18"/></g>
<g transform="translate(725.90 153.80) scale(0.93) translate(-11 -11)"><rect x="1" y="2" width="20" height="18" rx="4"/></g>
<g transform="translate(753.40 153.80) scale(0.93) translate(-11 -11)"><path d="M1 2h14l6 6v12H1z"/></g>
<g transform="translate(780.90 153.80) scale(0.93) translate(-11 -11)"><path d="M6 2h10l5 5v13H1V7z"/></g>
<g transform="translate(808.40 153.80) scale(0.93) translate(-11 -11)"><path d="M1 2h14l6 6v12H7l-6-6z"/></g>
<g transform="translate(835.90 153.80) scale(0.93) translate(-11 -11)"><path d="M6 2h10l5 5v13H1V7a5 5 0 0 1 5-5z"/></g>
<g transform="translate(863.40 153.80) scale(0.93) translate(-11 -11)"><path d="M1 2h14a6 6 0 0 1 6 6v12H1z"/></g>
<g transform="translate(890.90 153.80) scale(0.93) translate(-11 -11)"><path d="M6 2h10a5 5 0 0 1 5 5v13H1V7a5 5 0 0 1 5-5z"/></g>
<g transform="translate(918.40 153.80) scale(0.93) translate(-11 -11)"><path d="M7 2H21v12a6 6 0 0 1-6 6H1V8a6 6 0 0 1 6-6z"/></g>
<g transform="translate(698.40 202.00) scale(0.93) translate(-11 -11)"><circle cx="11" cy="11" r="9.5"/></g>
<g transform="translate(725.90 202.00) scale(0.93) translate(-11 -11)"><path d="M11 2.5L20 19H2z"/></g>
<g transform="translate(753.40 202.00) scale(0.93) translate(-11 -11)"><path d="M2 1.5L20.5 20H2z"/></g>
<g transform="translate(780.90 202.00) scale(0.93) translate(-11 -11)"><path d="M6 2h15l-5 18H1z"/></g>
<g transform="translate(808.40 202.00) scale(0.93) translate(-11 -11)"><path d="M5 2.5h12l4 17H1z"/></g>
<g transform="translate(835.90 202.00) scale(0.93) translate(-11 -11)"><path d="M11 1.5l9.5 9.5-9.5 9.5L1.5 11z"/></g>
<g transform="translate(863.40 202.00) scale(0.93) translate(-11 -11)"><polygon points="11.00,1.80 20.51,8.71 16.88,19.89 5.12,19.89 1.49,8.71"/></g>
<g transform="translate(890.90 202.00) scale(0.93) translate(-11 -11)"><path d="M6 2.5h10l5 8.5-5 8.5H6L1 11z"/><text x="11" y="14.3" font-size="9.5" text-anchor="middle" font-family="Liberation Sans" fill="#202124" stroke="#202124" stroke-width="0.35" letter-spacing="-0.5">6</text></g>
<g transform="translate(918.40 202.00) scale(0.93) translate(-11 -11)"><path d="M6 2.5h10l5 8.5-5 8.5H6L1 11z"/><text x="11" y="14.3" font-size="9.5" text-anchor="middle" font-family="Liberation Sans" fill="#202124" stroke="#202124" stroke-width="0.35" letter-spacing="-0.5">7</text></g>
<g transform="translate(945.90 202.00) scale(0.93) translate(-11 -11)"><polygon points="14.83,1.76 20.24,7.17 20.24,14.83 14.83,20.24 7.17,20.24 1.76,14.83 1.76,7.17 7.17,1.76"/><text x="11" y="14.3" font-size="9.5" text-anchor="middle" font-family="Liberation Sans" fill="#202124" stroke="#202124" stroke-width="0.35" letter-spacing="-0.5">8</text></g>
<g transform="translate(973.40 202.00) scale(0.93) translate(-11 -11)"><polygon points="14.83,1.76 20.24,7.17 20.24,14.83 14.83,20.24 7.17,20.24 1.76,14.83 1.76,7.17 7.17,1.76"/><text x="11" y="14.3" font-size="8.5" text-anchor="middle" font-family="Liberation Sans" fill="#202124" stroke="#202124" stroke-width="0.35" letter-spacing="-0.5">10</text></g>
<g transform="translate(1000.90 202.00) scale(0.93) translate(-11 -11)"><polygon points="14.83,1.76 20.24,7.17 20.24,14.83 14.83,20.24 7.17,20.24 1.76,14.83 1.76,7.17 7.17,1.76"/><text x="11" y="14.3" font-size="8.5" text-anchor="middle" font-family="Liberation Sans" fill="#202124" stroke="#202124" stroke-width="0.35" letter-spacing="-0.5">12</text></g>
<g transform="translate(698.40 229.80) scale(0.93) translate(-11 -11)"><path d="M11 2a9 9 0 1 0 9 9h-9z"/></g>
<g transform="translate(725.90 229.80) scale(0.93) translate(-11 -11)"><path d="M17 3.5A9 9 0 1 0 20 11z"/></g>
<g transform="translate(753.40 229.80) scale(0.93) translate(-11 -11)"><path d="M11 2h9v9a9 9 0 1 1-9-9z"/></g>
<g transform="translate(780.90 229.80) scale(0.93) translate(-11 -11)"><path d="M11 2h9v9a9 9 0 1 1-9-9z"/></g>
<g transform="translate(808.40 229.80) scale(0.93) translate(-11 -11)"><rect x="1" y="2" width="20" height="18"/><rect x="5" y="6" width="12" height="10"/></g>
<g transform="translate(835.90 229.80) scale(0.93) translate(-11 -11)"><path d="M1 2h20l-4 4H5v10l-4 4z"/></g>
<g transform="translate(863.40 229.80) scale(0.93) translate(-11 -11)"><path d="M1 2h9v9h11v9H1z"/></g>
<g transform="translate(890.90 229.80) scale(0.93) translate(-11 -11)"><path d="M10 2h11L1 20V11z"/></g>
<g transform="translate(918.40 229.80) scale(0.93) translate(-11 -11)"><path d="M7 2h8v5h6v8h-6v5H7v-5H1V7h6z"/></g>
<g transform="translate(945.90 229.80) scale(0.93) translate(-11 -11)"><path d="M6 2h10a4 4 0 0 0 5 5v8a4 4 0 0 0-5 5H6a4 4 0 0 0-5-5V7a4 4 0 0 0 5-5z"/></g>
<g transform="translate(973.40 229.80) scale(0.93) translate(-11 -11)"><path d="M2 5.5v11a9 3.5 0 0 0 18 0v-11"/><ellipse cx="11" cy="5.5" rx="9" ry="3.5"/></g>
<g transform="translate(1000.90 229.80) scale(0.93) translate(-11 -11)"><path d="M1 6l4-4h16v14l-4 4H1z"/><path d="M1 6h16v14M17 6l4-4"/><path d="M17 6l4-4v14l-4 4z" fill="#bdc1c6"/></g>
<g transform="translate(698.40 257.20) scale(0.93) translate(-11 -11)"><rect x="1" y="2" width="20" height="18"/><rect x="3.5" y="4.5" width="15" height="13"/><path d="M1 2l2.5 2.5M21 2l-2.5 2.5M1 20l2.5-2.5M21 20l-2.5-2.5"/></g>
<g transform="translate(725.90 257.20) scale(0.93) translate(-11 -11)"><circle cx="11" cy="11" r="9.5"/><circle cx="11" cy="11" r="4.5"/></g>
<g transform="translate(753.40 257.20) scale(0.93) translate(-11 -11)"><circle cx="11" cy="11" r="9.5"/><circle cx="11" cy="11" r="5.5"/><path d="M7 15L15 7" stroke-width="3"/></g>
<g transform="translate(780.90 257.20) scale(0.93) translate(-11 -11)"><path d="M2 15a9 9 0 0 1 18 0h-4a5 5 0 0 0-10 0z"/></g>
<g transform="translate(808.40 257.20) scale(0.93) translate(-11 -11)"><path d="M2 2h18v13l-5 5H2z"/><path d="M15 20l1-4 4-1"/></g>
<g transform="translate(835.90 257.20) scale(0.93) translate(-11 -11)"><circle cx="11" cy="11" r="9.5"/><circle cx="8" cy="8.5" r="1" fill="#202124"/><circle cx="14" cy="8.5" r="1" fill="#202124"/><path d="M6.5 13a5 5 0 0 0 9 0"/></g>
<g transform="translate(863.40 257.20) scale(0.93) translate(-11 -11)"><path d="M11 19.5C3 14 1 10 1.5 6.5 2 3.5 4.5 2 7 2.5c2 .3 3.3 1.6 4 3.2.7-1.6 2-2.9 4-3.2 2.5-.5 5 1 5.5 4 .5 3.5-1.5 7.5-9.5 13z"/></g>
<g transform="translate(890.90 257.20) scale(0.93) translate(-11 -11)"><path d="M1 3l6-1 5 5-2 1 6 5-2 1 7 7-10-5 2-1-7-4 2-1z"/></g>
<g transform="translate(918.40 257.20) scale(0.93) translate(-11 -11)"><circle cx="11" cy="11" r="4.5"/><path d="M11 1.5v2.5M11 18v2.5M1.5 11H4M18 11h2.5M4.3 4.3l1.8 1.8M15.9 15.9l1.8 1.8M4.3 17.7l1.8-1.8M15.9 6.1l1.8-1.8"/></g>
<g transform="translate(945.90 257.20) scale(0.93) translate(-11 -11)"><path d="M15 2a9 9 0 1 0 0 18 9.5 9.5 0 0 1 0-18z"/></g>
<g transform="translate(973.40 257.20) scale(0.93) translate(-11 -11)"><path d="M5 8a3 3 0 0 1 4-4 3 3 0 0 1 5 0 3 3 0 0 1 4 3 3 3 0 0 1 2 5 3 3 0 0 1-3 4 3 3 0 0 1-5 2 3 3 0 0 1-5-1 3 3 0 0 1-4-3 3 3 0 0 1 0-5 3 3 0 0 1 2-1z"/></g>
<g transform="translate(698.40 305.60) scale(0.93) translate(-11 -11)"><rect x="1" y="2" width="20" height="17"/></g>
<g transform="translate(725.90 305.60) scale(0.93) translate(-11 -11)"><rect x="1" y="2" width="20" height="17" rx="4"/></g>
<g transform="translate(753.40 305.60) scale(0.93) translate(-11 -11)"><path d="M11 6l9.5 4.5L11 15 1.5 10.5z"/></g>
<g transform="translate(780.90 305.60) scale(0.93) translate(-11 -11)"><path d="M6 2h15l-5 17H1z"/></g>
<g transform="translate(808.40 305.60) scale(0.93) translate(-11 -11)"><rect x="1" y="2" width="20" height="17"/><path d="M4 2v17M18 2v17"/></g>
<g transform="translate(835.90 305.60) scale(0.93) translate(-11 -11)"><rect x="1" y="2" width="20" height="17"/><path d="M4 2v17M1 5h20"/></g>
<g transform="translate(863.40 305.60) scale(0.93) translate(-11 -11)"><path d="M1 2h20v15c-4-4-6 0-10 2s-6-2-10-2z"/></g>
<g transform="translate(890.90 305.60) scale(0.93) translate(-11 -11)"><path d="M5 2h16v12M3 4h16v12"/><path d="M1 6h16v12c-3-2-5 0-8 1.5S4 17 1 17z"/></g>
<g transform="translate(918.40 305.60) scale(0.93) translate(-11 -11)"><rect x="1" y="6.5" width="20" height="9" rx="4.5"/></g>
<g transform="translate(945.90 305.60) scale(0.93) translate(-11 -11)"><path d="M6 3h10l5 7.5-5 7.5H6L1 10.5z"/></g>
<g transform="translate(973.40 305.60) scale(0.93) translate(-11 -11)"><path d="M1 8l20-5v16H1z"/></g>
<g transform="translate(1000.90 305.60) scale(0.93) translate(-11 -11)"><path d="M1 2h20l-4 17H5z"/></g>
<g transform="translate(698.40 333.20) scale(0.93) translate(-11 -11)"><circle cx="11" cy="11" r="8.5"/></g>
<g transform="translate(725.90 333.20) scale(0.93) translate(-11 -11)"><path d="M2 2h18v12l-9 5-9-5z"/></g>
<g transform="translate(753.40 333.20) scale(0.93) translate(-11 -11)"><path d="M6 2h15v17H1V7z"/></g>
<g transform="translate(780.90 333.20) scale(0.93) translate(-11 -11)"><path d="M1 3c3 2 7 2 10 0s7-2 10 0v15c-3-2-7-2-10 0s-7 2-10 0z"/></g>
<g transform="translate(808.40 333.20) scale(0.93) translate(-11 -11)"><circle cx="11" cy="11" r="9"/><path d="M4.6 4.6l12.8 12.8M17.4 4.6L4.6 17.4"/></g>
<g transform="translate(835.90 333.20) scale(0.93) translate(-11 -11)"><circle cx="11" cy="11" r="9"/><path d="M11 2v18M2 11h18"/></g>
<g transform="translate(863.40 333.20) scale(0.93) translate(-11 -11)"><path d="M5 2h12L5 20h12z"/></g>
<g transform="translate(890.90 333.20) scale(0.93) translate(-11 -11)"><path d="M11 2l5 9-5 9-5-9z"/><path d="M6 11h10"/></g>
<g transform="translate(918.40 333.20) scale(0.93) translate(-11 -11)"><path d="M11 3l9 15H2z"/></g>
<g transform="translate(945.90 333.20) scale(0.93) translate(-11 -11)"><path d="M2 4h18l-9 15z"/></g>
<g transform="translate(973.40 333.20) scale(0.93) translate(-11 -11)"><path d="M6 2h15a5 8.5 0 0 0 0 17H6A5 8.5 0 0 1 6 2z"/></g>
<g transform="translate(1000.90 333.20) scale(0.93) translate(-11 -11)"><path d="M1 2h10a10 8.5 0 0 1 0 17H1z"/></g>
<g transform="translate(698.40 361.00) scale(0.93) translate(-11 -11)"><path d="M11 20a9 9 0 1 1 9-9 9 9 0 0 1-6 8.5h7v1z"/></g>
<g transform="translate(725.90 361.00) scale(0.93) translate(-11 -11)"><path d="M2 5v12a9 3 0 0 0 18 0V5"/><ellipse cx="11" cy="5" rx="9" ry="3"/></g>
<g transform="translate(753.40 361.00) scale(0.93) translate(-11 -11)"><path d="M5 2h12a4 8.5 0 0 1 0 17H5A4 8.5 0 0 1 5 2z"/><path d="M17 2a4 8.5 0 0 0 0 17"/></g>
<g transform="translate(780.90 361.00) scale(0.93) translate(-11 -11)"><path d="M5 2h10a6 8.5 0 0 1 0 17H5l-4-8.5z"/></g></g></svg><div class="a" style="left:708px;top:222px;width:48px;height:30px;background:#202124;border-radius:2px;box-shadow:0 1px 2px rgba(0,0,0,.2)"></div><div class="a" style="left:708px;top:227px;width:48px;text-align:center;font-size:14.6px;line-height:20px;color:#fff">Oval</div><!-- /SHAPES -->
</body></html>
